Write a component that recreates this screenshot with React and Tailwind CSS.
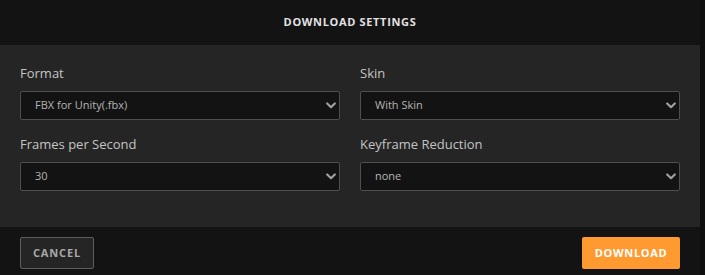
import React from 'react';

const font = { fontFamily: '"Open Sans", "Noto Sans", sans-serif' };

function Chevron() {
  return (
    <svg width="10" height="7" viewBox="0 0 10 7" className="shrink-0">
      <path d="M1.2 1.5 L5 5.2 L8.8 1.5" fill="none" stroke="#a0a0a0" strokeWidth="2.2" strokeLinecap="round" strokeLinejoin="round" />
    </svg>
  );
}

function Field({ label, value }) {
  return (
    <div className="flex flex-col">
      <div className="text-[13px] leading-[19px] text-[#c4c4c4]">{label}</div>
      <div className="mt-[8px] flex h-[29px] items-center justify-between rounded-[2px] border border-[#4e4e4e] bg-[#131313] pl-[14px] pr-[3px]">
        <span className="text-[11px] text-[#b4b4b4]">{value}</span>
        <Chevron />
      </div>
    </div>
  );
}

export default function App() {
  return (
    <div className="flex h-[275px] w-[705px] bg-[#0f0f0f]" style={font}>
      <div className="flex w-[700px] flex-col">
        {/* Titre */}
        <div className="flex h-[45px] shrink-0 items-center justify-center bg-[#131313]">
          <span className="text-[11px] font-bold tracking-[0.06em] text-[#e2e2e2]">DOWNLOAD SETTINGS</span>
        </div>

        {/* Réglages */}
        <div className="grid shrink-0 grid-cols-2 gap-x-[20px] gap-y-[15px] bg-[#252525] px-[20px] pt-[19px] pb-[36px]">
          <Field label="Format" value="FBX for Unity(.fbx)" />
          <Field label="Skin" value="With Skin" />
          <Field label="Frames per Second" value="30" />
          <Field label="Keyframe Reduction" value="none" />
        </div>

        {/* Actions */}
        <div className="flex flex-1 items-start justify-between bg-[#131313] px-[20px] pt-[10px]">
          <button className="flex h-[32px] w-[74px] items-center justify-center rounded-[2px] border border-[#5e5e5e] bg-[#252525] text-[11px] font-bold tracking-[0.08em] text-[#a8a8a8]">
            CANCEL
          </button>
          <button className="flex h-[32px] w-[98px] items-center justify-center rounded-[2px] bg-[#ff9a30] text-[11px] font-bold tracking-[0.06em] text-white">
            DOWNLOAD
          </button>
        </div>
      </div>
    </div>
  );
}
